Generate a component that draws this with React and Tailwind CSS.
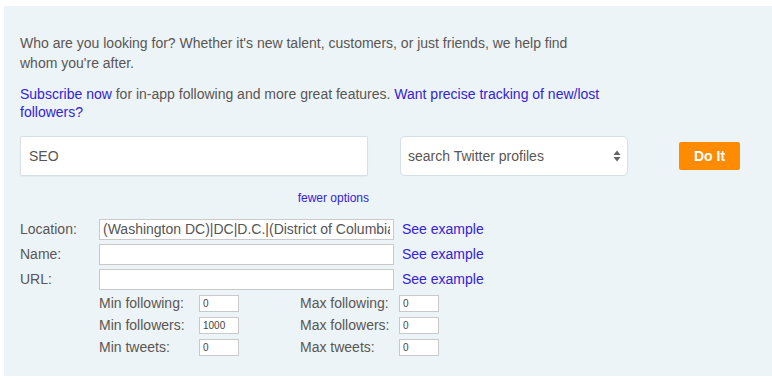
import { useState } from 'react';

const ranges = [
  { min: 'Min following:', minVal: '0', max: 'Max following:', maxVal: '0' },
  { min: 'Min followers:', minVal: '1000', max: 'Max followers:', maxVal: '0' },
  { min: 'Min tweets:', minVal: '0', max: 'Max tweets:', maxVal: '0' },
];

function SmallInput({ value }) {
  return (
    <input
      type="text"
      defaultValue={value}
      className="w-[40px] h-[17px] bg-white border border-[#c9c9c9] px-[3px] text-[10px] text-[#444] outline-none"
    />
  );
}

function FieldRow({ label, value }) {
  return (
    <div className="flex items-center h-[21px]">
      <span className="w-[79px] shrink-0">{label}</span>
      <input
        type="text"
        defaultValue={value}
        className="w-[295px] h-[21px] bg-white border border-[#c9c9c9] px-[3px] text-[14px] text-[#555] outline-none"
      />
      <a href="#" className="ml-[8px] text-[#3322d8]">See example</a>
    </div>
  );
}

export default function App() {
  const [query, setQuery] = useState('SEO');

  return (
    <div className="w-[772px] h-[384px] bg-white pt-[6px] pl-[4px] font-['Liberation_Sans',Arial,sans-serif] text-[14px] text-[#5a5653]">
      <div className="h-[370px] bg-[#edf4f7] pl-[16px] pt-[27px]">
        {/* Intro */}
        <p className="w-[586px] leading-[20px]">
          Who are you looking for? Whether it's new talent, customers, or just friends, we help find whom you're after.
        </p>
        <p className="w-[586px] leading-[18px] mt-[12px]">
          <a href="#" className="text-[#3322d8]">Subscribe now</a> for in-app following and more great features.{' '}
          <a href="#" className="text-[#3322d8]">Want precise tracking of new/lost followers?</a>
        </p>

        {/* Search row */}
        <div className="flex items-center mt-[15px]">
          <input
            type="text"
            value={query}
            onChange={(e) => setQuery(e.target.value)}
            className="w-[348px] h-[40px] bg-white border border-[#d6e0e4] rounded-[2px] shadow-[0_1px_1px_rgba(0,0,0,0.04)] px-[8px] text-[14px] text-[#5a5653] outline-none"
          />
          <div className="ml-[32px] w-[228px] h-[40px] bg-white border border-[#d6e0e4] rounded-[5px] flex items-center justify-between pl-[7px] pr-[6px]">
            <span>search Twitter profiles</span>
            <svg width="8" height="12" viewBox="0 0 8 12" className="text-[#666]">
              <path d="M4 0.5 L7.5 5 L0.5 5 Z" fill="currentColor" />
              <path d="M4 11.5 L7.5 7 L0.5 7 Z" fill="currentColor" />
            </svg>
          </div>
          <button className="ml-[51px] w-[61px] h-[28px] bg-[#ff8b00] rounded-[2px] text-white font-bold text-[14px]">
            Do It
          </button>
        </div>

        <div className="w-[349px] text-right mt-[13px] leading-[16px]">
          <a href="#" className="text-[12px] text-[#3322d8]">fewer options</a>
        </div>

        {/* Advanced options */}
        <div className="mt-[13px] flex flex-col gap-[4px]">
          <FieldRow label="Location:" value="(Washington DC)|DC|D.C.|(District of Columbia)" />
          <FieldRow label="Name:" value="" />
          <FieldRow label="URL:" value="" />
        </div>

        <div className="mt-[5px] ml-[79px] flex flex-col gap-[5px]">
          {ranges.map((r) => (
            <div key={r.min} className="flex items-center h-[17px]">
              <span className="w-[100px] shrink-0">{r.min}</span>
              <SmallInput value={r.minVal} />
              <span className="ml-[61px] w-[99px] shrink-0">{r.max}</span>
              <SmallInput value={r.maxVal} />
            </div>
          ))}
        </div>
      </div>
    </div>
  );
}
